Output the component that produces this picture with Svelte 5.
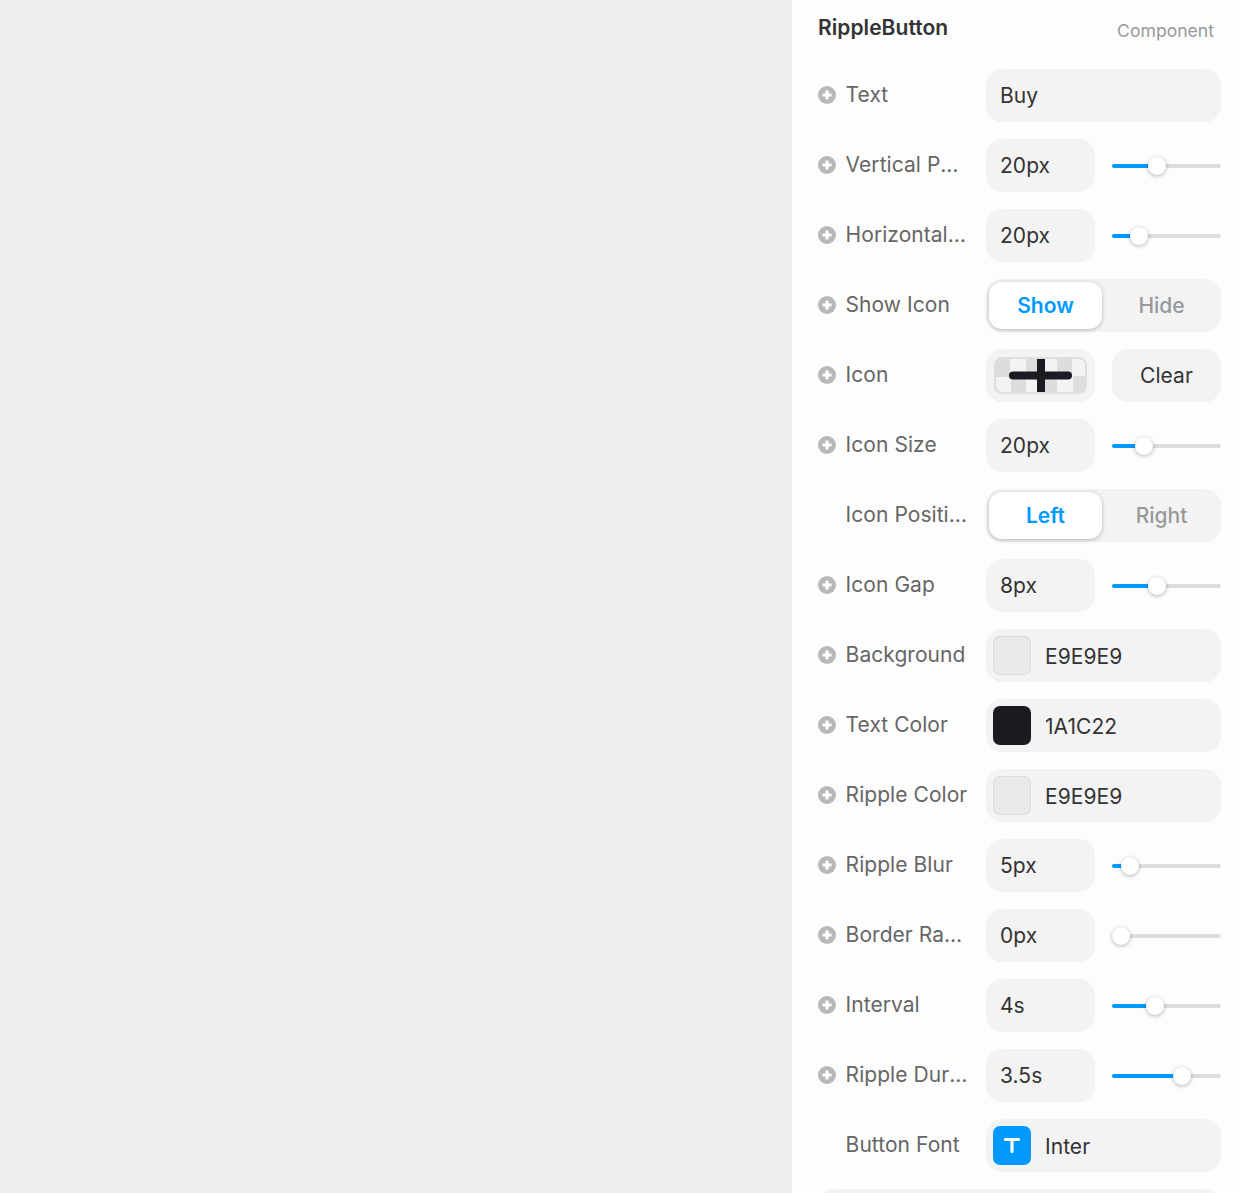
<script>
  const rows = [
    { label: 'Text', type: 'text', value: 'Buy' },
    { label: 'Vertical Padding', type: 'slider', value: '20px', pos: 36 },
    { label: 'Horizontal Padding', type: 'slider', value: '20px', pos: 18 },
    { label: 'Show Icon', type: 'seg', on: 'Show', off: 'Hide' },
    { label: 'Icon', type: 'icon' },
    { label: 'Icon Size', type: 'slider', value: '20px', pos: 23 },
    { label: 'Icon Position', type: 'seg', on: 'Left', off: 'Right', noAdd: true },
    { label: 'Icon Gap', type: 'slider', value: '8px', pos: 36 },
    { label: 'Background', type: 'color', value: 'E9E9E9' },
    { label: 'Text Color', type: 'color', value: '1A1C22' },
    { label: 'Ripple Color', type: 'color', value: 'E9E9E9' },
    { label: 'Ripple Blur', type: 'slider', value: '5px', pos: 9 },
    { label: 'Border Radius', type: 'slider', value: '0px', pos: 0 },
    { label: 'Interval', type: 'slider', value: '4s', pos: 34 },
    { label: 'Ripple Duration', type: 'slider', value: '3.5s', pos: 61 },
    { label: 'Button Font', type: 'font', value: 'Inter', noAdd: true },
  ];
</script>

<div class="page">
  <div class="canvas"></div>
  <aside class="panel">
    <header class="head">
      <span class="title">RippleButton</span>
      <span class="kind">Component</span>
    </header>

    {#each rows as row}
      <div class="row">
        <div class="label">
          {#if !row.noAdd}
            <svg class="add" viewBox="0 0 18 18" width="18" height="18">
              <circle cx="9" cy="9" r="9" fill="#b8b8b8" />
              <path d="M9 4.5v9M4.5 9h9" stroke="#fff" stroke-width="3" />
            </svg>
          {/if}
          <span class="name">{row.label}</span>
        </div>

        {#if row.type === 'text'}
          <div class="field wide">{row.value}</div>
        {:else if row.type === 'slider'}
          <div class="pair">
            <div class="field">{row.value}</div>
            <div class="slider">
              <div class="track"></div>
              <div class="fill" style="width: {row.pos + 9}px"></div>
              <div class="thumb" style="left: {row.pos}px"></div>
            </div>
          </div>
        {:else if row.type === 'seg'}
          <div class="seg">
            <div class="seg-on">{row.on}</div>
            <div class="seg-off">{row.off}</div>
          </div>
        {:else if row.type === 'icon'}
          <div class="pair">
            <div class="field preview">
              <div class="checker">
                <svg viewBox="0 0 93 37" width="93" height="37">
                  <path d="M19 18.5h55" stroke="#1a1c22" stroke-width="8" stroke-linecap="round" />
                  <path d="M47 0v37" stroke="#1a1c22" stroke-width="8" />
                </svg>
              </div>
            </div>
            <div class="field clear">Clear</div>
          </div>
        {:else if row.type === 'color'}
          <div class="field wide swatch-field">
            <span class="swatch" style="background: #{row.value}"></span>
            <span class="value">{row.value}</span>
          </div>
        {:else if row.type === 'font'}
          <div class="field wide swatch-field">
            <span class="swatch font-swatch">
              <svg viewBox="0 0 38 38" width="38" height="38">
                <path d="M12.5 13.5h13M19 13.5v12" stroke="#fff" stroke-width="3.2" stroke-linecap="round" />
              </svg>
            </span>
            <span class="value">{row.value}</span>
          </div>
        {/if}
      </div>
    {/each}

    <div class="field next"></div>
  </aside>
</div>

<style>
  :global(body) {
    margin: 0;
    overflow: hidden;
  }
  .page {
    display: flex;
    height: 1193px;
    overflow: hidden;
    font-family: Inter, "Liberation Sans", sans-serif;
  }
  .canvas {
    flex: 1;
    background: #eeeeee;
  }
  .panel {
    width: 448px;
    flex-shrink: 0;
    box-sizing: border-box;
    padding: 0 19px 0 26px;
    background: #fdfdfd;
    overflow: hidden;
  }
  .head {
    display: flex;
    align-items: center;
    justify-content: space-between;
    height: 56px;
    padding-right: 7px;
    margin-bottom: 13px;
  }
  .title {
    font-size: 21px;
    font-weight: 600;
    letter-spacing: 0.05px;
    color: #333;
    margin-bottom: 2px;
  }
  .kind {
    font-size: 17.6px;
    color: #999;
    margin-top: 4px;
  }
  .row {
    display: flex;
    align-items: center;
    height: 53px;
    margin-bottom: 17px;
  }
  .label {
    width: 168px;
    flex-shrink: 0;
    display: flex;
    align-items: center;
    padding-left: 27.6px;
    padding-bottom: 2px;
    box-sizing: border-box;
    position: relative;
  }
  .add {
    position: absolute;
    left: 0;
    top: 50%;
    margin-top: -10px;
  }
  .name {
    width: 123px;
    font-size: 21px;
    letter-spacing: 0.05px;
    color: #666;
    white-space: nowrap;
    overflow: hidden;
    text-overflow: ellipsis;
  }
  .pair {
    display: flex;
    gap: 17px;
    width: 235px;
  }
  .field {
    width: 109px;
    height: 53px;
    box-sizing: border-box;
    display: flex;
    align-items: center;
    padding: 0 14px 1px;
    border-radius: 16px;
    background: #f3f3f3;
    font-size: 21px;
    letter-spacing: 0.05px;
    color: #333;
  }
  .wide {
    width: 235px;
  }
  .slider {
    position: relative;
    width: 109px;
    height: 53px;
  }
  .track,
  .fill {
    position: absolute;
    left: 0;
    top: 25px;
    height: 4px;
    border-radius: 2px;
  }
  .track {
    width: 100%;
    background: #dddddd;
  }
  .fill {
    background: #0099ff;
  }
  .thumb {
    position: absolute;
    top: 18px;
    width: 18px;
    height: 18px;
    border-radius: 50%;
    background: #fff;
    box-shadow: 0 1px 4px rgba(0, 0, 0, 0.3);
  }
  .seg {
    display: flex;
    width: 235px;
    height: 53px;
    box-sizing: border-box;
    padding: 3px 0 3px 3px;
    border-radius: 16px;
    background: #f3f3f3;
    font-size: 21px;
  }
  .seg-on,
  .seg-off {
    display: flex;
    align-items: center;
    justify-content: center;
    padding-bottom: 1px;
    box-sizing: border-box;
  }
  .seg-on {
    width: 113px;
    border-radius: 13px;
    background: #fff;
    color: #0099ff;
    font-weight: 600;
    box-shadow: 0 1px 4px rgba(0, 0, 0, 0.25);
  }
  .seg-off {
    flex: 1;
    color: #999;
    font-weight: 500;
  }
  .preview {
    padding: 8px;
  }
  .checker {
    width: 100%;
    height: 37px;
    flex-shrink: 0;
    box-sizing: border-box;
    border: 2px solid #dedede;
    border-radius: 8px;
    overflow: hidden;
    background-color: #f3f3f3;
    background-image: conic-gradient(transparent 25%, #dddddd 0 50%, transparent 0 75%, #dddddd 0);
    background-size: 31px 35px;
    background-position: -1px 0;
  }
  .checker svg {
    display: block;
    margin: -2px;
  }
  .clear {
    justify-content: center;
    padding: 0 0 1px;
  }
  .swatch-field {
    gap: 14px;
    padding: 0 7px;
  }
  .value {
    margin-top: 2px;
  }
  .swatch {
    width: 38px;
    height: 39px;
    flex-shrink: 0;
    box-sizing: border-box;
    border: 1px solid rgba(0, 0, 0, 0.06);
    border-radius: 7px;
  }
  .font-swatch {
    background: #0099ff;
    border: 0;
  }
  .font-swatch svg {
    display: block;
  }
  .next {
    width: 100%;
  }
</style>
